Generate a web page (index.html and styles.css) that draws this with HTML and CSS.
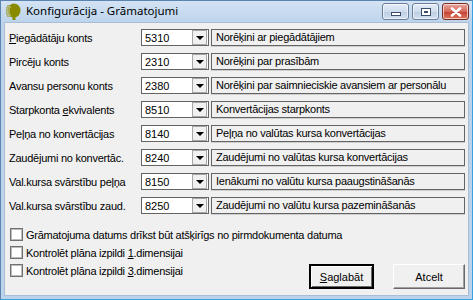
FILE: index.html
```html
<!DOCTYPE html>
<html lang="lv">
<head>
    <meta charset="UTF-8">
    <title>Konfigurācija - Grāmatojumi</title>
    <link rel="stylesheet" href="styles.css">
</head>
<body>
    <div class="window">
        <div class="titlebar">
            <svg class="appicon" width="16" height="17" viewBox="0 0 16 17">
                <ellipse cx="9" cy="7.5" rx="6.5" ry="7" fill="#8a8a00"/>
                <rect x="7.5" y="11" width="3" height="6" fill="#8a8a00"/>
                <path d="M2 3h5M1 5h5M1 7h5M1 9h5M1 11h5M2 13h5" stroke="#8a8a00" stroke-width="1.2"/>
                <path d="M3 4h3M2 6h3M2 8h3M2 10h3M3 12h3" stroke="#d7e3d0" stroke-width="0.8"/>
            </svg>
            <span class="title">Konfigurācija - Grāmatojumi</span>
            <div class="caption-btns">
                <a href="javascript:;" class="cbtn min"><i></i></a>
                <a href="javascript:;" class="cbtn max"><i></i></a>
                <a href="javascript:;" class="cbtn close">
                    <svg width="14" height="10" viewBox="0 0 14 10"><path d="M3 1.5l8 7M11 1.5l-8 7" stroke="#fff" stroke-width="2.6" stroke-linecap="round"/></svg>
                </a>
            </div>
        </div>
        <div class="client">
            <div class="rows">
                <label class="lbl"><u>P</u>iegādātāju konts</label>
                <div class="combo"><span>5310</span><b class="drop"></b></div>
                <div class="name">Norēķini ar piegādātājiem</div>

                <label class="lbl">Pircēju konts</label>
                <div class="combo"><span>2310</span><b class="drop"></b></div>
                <div class="name">Norēķini par prasībām</div>

                <label class="lbl">Avansu personu konts</label>
                <div class="combo"><span>2380</span><b class="drop"></b></div>
                <div class="name">Norēķini par saimnieciskie avansiem ar personālu</div>

                <label class="lbl">Starpkonta <u>e</u>kvivalents</label>
                <div class="combo"><span>8510</span><b class="drop"></b></div>
                <div class="name">Konvertācijas starpkonts</div>

                <label class="lbl">Peļņa no konvertācijas</label>
                <div class="combo"><span>8140</span><b class="drop"></b></div>
                <div class="name">Peļņa no valūtas kursa konvertācijas</div>

                <label class="lbl">Zaudējumi no konvertāc.</label>
                <div class="combo"><span>8240</span><b class="drop"></b></div>
                <div class="name">Zaudējumi no valūtas kursa konvertācijas</div>

                <label class="lbl">Val.kursa svārstību peļņa</label>
                <div class="combo"><span>8150</span><b class="drop"></b></div>
                <div class="name">Ienākumi no valūtu kursa paaugstināšanās</div>

                <label class="lbl">Val.kursa svārstību zaud.</label>
                <div class="combo"><span>8250</span><b class="drop"></b></div>
                <div class="name">Zaudējumi no valūtu kursa pazemināšanās</div>
            </div>
            <div class="bottom">
                <div class="checks">
                    <label class="chk"><i></i><span>Grāmatojuma datums drīkst būt atšķirīgs no pirmdokumenta datuma</span></label>
                    <label class="chk"><i></i><span>Kontrolēt plāna izpildi <u>1</u>.dimensijai</span></label>
                    <label class="chk"><i></i><span>Kontrolēt plāna izpildi <u>3</u>.dimensijai</span></label>
                </div>
                <div class="buttons">
                    <a href="javascript:;" class="btn default"><span><u>S</u>aglabāt</span></a>
                    <a href="javascript:;" class="btn cancel">Atcelt</a>
                </div>
            </div>
        </div>
    </div>
</body>
</html>
```

FILE: styles.css
```css
*{
    margin: 0;
    padding: 0;
    box-sizing: border-box;
}
body{
    width: 473px;
    height: 300px;
    overflow: hidden;
    font-family: "Liberation Sans", Arial, sans-serif;
    font-size: 11px;
    color: #000;
}
.window{
    width: 473px;
    height: 300px;
    background: linear-gradient(#d3e3f4, #bcd3eb 22px);
    border: 1px solid #5b84b0;
    border-right-color: #3aa0e0;
    border-bottom-color: #3aa0e0;
    padding: 0 3px 3px 3px;
    display: flex;
    flex-direction: column;
}
.titlebar{
    height: 21px;
    display: flex;
    align-items: center;
    flex-shrink: 0;
}
.appicon{
    margin: 0 5px 0 1px;
}
.title{
    font-family: "Noto Sans", "DejaVu Sans", sans-serif;
    font-size: 11.5px;
    color: #000;
    flex: 1;
    position: relative;
    top: -1px;
}
.caption-btns{
    display: flex;
    gap: 3px;
    align-self: flex-start;
    margin-top: 2px;
}
.cbtn{
    width: 27px;
    height: 17px;
    border: 1px solid #6a7f99;
    border-radius: 3px;
    background: linear-gradient(#e6eef8, #cfdced 50%, #bccde3 51%, #d2e0f0);
    display: flex;
    align-items: center;
    justify-content: center;
    box-shadow: inset 0 0 0 1px rgba(255,255,255,.6);
}
.cbtn.close{
    border-color: #7a2a22;
    background: linear-gradient(#e8a89c, #d4675a 50%, #c3402f 51%, #d9765f);
}
.min i{
    width: 10px;
    height: 4px;
    margin-top: 5px;
    background: #fff;
    border: 1px solid #3c4e6a;
}
.max i{
    width: 10px;
    height: 8px;
    background: #fff;
    border: 1px solid #3c4e6a;
    box-shadow: inset 0 0 0 2px #fff, inset 0 0 0 3px #3c4e6a;
}
.client{
    flex: 1;
    background: #f0f0f0;
    border: 1px solid #a9bed6;
    padding: 6px 2px 0 4px;
    display: flex;
    flex-direction: column;
}
.rows{
    display: grid;
    grid-template-columns: 132px 68px 256px;
    grid-auto-rows: 17px;
    row-gap: 7px;
    align-items: center;
}
.lbl,
.name,
.chk span{
    letter-spacing: -0.25px;
}
.lbl{
    white-space: nowrap;
    padding-top: 1px;
}
.combo{
    height: 17px;
    background: #fff;
    border: 1px solid #646464;
    display: flex;
    align-items: center;
    justify-content: space-between;
    padding: 0 1px 0 3px;
}
.drop{
    width: 15px;
    height: 15px;
    background: #f0f0f0;
    border: 1px solid #a6a6a6;
    position: relative;
}
.drop::after{
    content: "";
    position: absolute;
    left: 3px;
    top: 5px;
    border-left: 4px solid transparent;
    border-right: 4px solid transparent;
    border-top: 4px solid #000;
}
.name{
    height: 17px;
    margin-left: 2px;
    background: #f0f0f0;
    border: 1px solid #646464;
    box-shadow: 0 1px 0 #cfcfcf;
    padding: 1px 0 0 4px;
    white-space: nowrap;
    overflow: hidden;
}
.bottom{
    display: grid;
    grid-template-areas: "a";
    flex: 1;
    margin-top: 14px;
}
.checks{
    grid-area: a;
    align-self: start;
    display: flex;
    flex-direction: column;
    gap: 5px;
    padding-left: 1px;
}
.chk{
    display: flex;
    align-items: center;
    height: 13px;
    white-space: nowrap;
}
.chk i{
    width: 13px;
    height: 13px;
    margin-right: 3px;
    background: #fff;
    border: 1px solid #707070;
    box-shadow: inset 0 0 0 1px #bcbcbc;
}
.buttons{
    grid-area: a;
    justify-self: end;
    align-self: end;
    display: flex;
    gap: 19px;
    margin-bottom: 6px;
    margin-right: 1px;
}
.btn{
    width: 65px;
    height: 25px;
    display: flex;
    align-items: center;
    justify-content: center;
    color: #000;
    text-decoration: none;
    background: #f0f0f0;
    border: 1px solid;
    border-color: #fff #696969 #696969 #fff;
    box-shadow: inset -1px -1px 0 #a0a0a0;
}
.btn.default{
    border: 2px solid #000;
    box-shadow: inset 1px 1px 0 #fff, inset -1px -1px 0 #696969;
}
.btn.cancel{
    width: 72px;
}
```
